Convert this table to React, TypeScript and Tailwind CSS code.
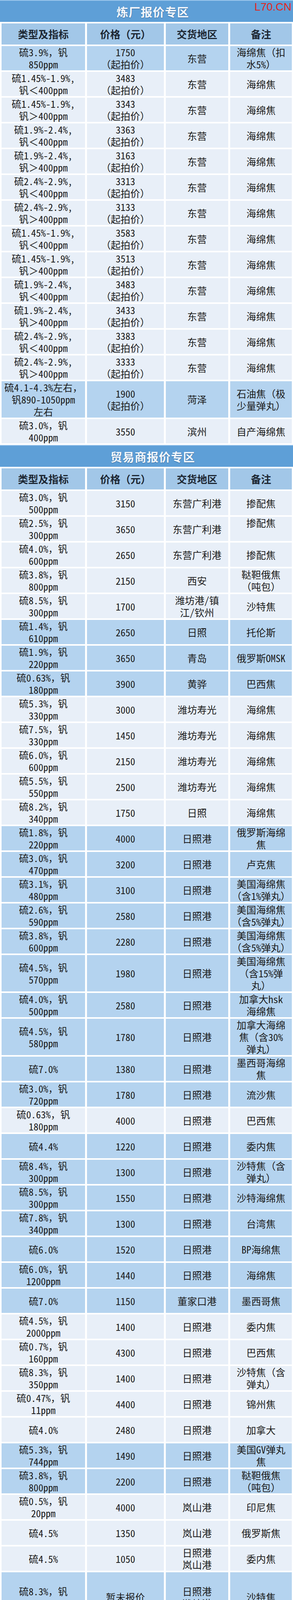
import React from "react";

type Row = { c: string[][]; hl?: boolean; h?: string };

const refinery: Row[] = [
  { c: [["硫3.9%，钒", "850ppm"], ["1750", "（起拍价）"], ["东营"], ["海绵焦（扣", "水5%）"]], hl: true },
  { c: [["硫1.45%-1.9%,", "钒＜400ppm"], ["3483", "（起拍价）"], ["东营"], ["海绵焦"]] },
  { c: [["硫1.45%-1.9%,", "钒＞400ppm"], ["3343", "（起拍价）"], ["东营"], ["海绵焦"]] },
  { c: [["硫1.9%-2.4%,", "钒＜400ppm"], ["3363", "（起拍价）"], ["东营"], ["海绵焦"]] },
  { c: [["硫1.9%-2.4%,", "钒＞400ppm"], ["3163", "（起拍价）"], ["东营"], ["海绵焦"]] },
  { c: [["硫2.4%-2.9%,", "钒＜400ppm"], ["3313", "（起拍价）"], ["东营"], ["海绵焦"]] },
  { c: [["硫2.4%-2.9%,", "钒＞400ppm"], ["3133", "（起拍价）"], ["东营"], ["海绵焦"]] },
  { c: [["硫1.45%-1.9%,", "钒＜400ppm"], ["3583", "（起拍价）"], ["东营"], ["海绵焦"]] },
  { c: [["硫1.45%-1.9%,", "钒＞400ppm"], ["3513", "（起拍价）"], ["东营"], ["海绵焦"]] },
  { c: [["硫1.9%-2.4%,", "钒＜400ppm"], ["3483", "（起拍价）"], ["东营"], ["海绵焦"]] },
  { c: [["硫1.9%-2.4%,", "钒＞400ppm"], ["3433", "（起拍价）"], ["东营"], ["海绵焦"]] },
  { c: [["硫2.4%-2.9%,", "钒＜400ppm"], ["3383", "（起拍价）"], ["东营"], ["海绵焦"]] },
  { c: [["硫2.4%-2.9%,", "钒＞400ppm"], ["3333", "（起拍价）"], ["东营"], ["海绵焦"]] },
  {
    c: [["硫4.1-4.3%左右，", "钒890-1050ppm", "左右"], ["1900", "（起拍价）"], ["菏泽"], ["石油焦（极", "少量弹丸）"]],
    hl: true,
    h: "h-[93px]",
  },
  { c: [["硫3.0%，钒", "400ppm"], ["3550"], ["滨州"], ["自产海绵焦"]] },
];

const trade: Row[] = [
  { c: [["硫3.0%，钒", "500ppm"], ["3150"], ["东营广利港"], ["掺配焦"]] },
  { c: [["硫2.5%，钒", "300ppm"], ["3650"], ["东营广利港"], ["掺配焦", "\u00a0"]] },
  { c: [["硫4.0%，钒", "600ppm"], ["2650"], ["东营广利港"], ["掺配焦"]] },
  { c: [["硫3.8%，钒", "800ppm"], ["2150"], ["西安"], ["鞑靼俄焦", "（吨包）"]] },
  { c: [["硫8.5%，钒", "300ppm"], ["1700"], ["潍坊港/镇", "江/钦州"], ["沙特焦"]] },
  { c: [["硫1.4%，钒", "610ppm"], ["2650"], ["日照"], ["托伦斯"]], hl: true },
  { c: [["硫1.9%，钒", "220ppm"], ["3650"], ["青岛"], ["俄罗斯OMSK"]], hl: true },
  { c: [["硫0.63%，钒", "180ppm"], ["3900"], ["黄骅"], ["巴西焦"]], hl: true },
  { c: [["硫5.3%，钒", "330ppm"], ["3000"], ["潍坊寿光"], ["海绵焦"]] },
  { c: [["硫7.5%，钒", "330ppm"], ["1450"], ["潍坊寿光"], ["海绵焦"]] },
  { c: [["硫6.0%，钒", "600ppm"], ["2150"], ["潍坊寿光"], ["海绵焦"]] },
  { c: [["硫5.5%，钒", "550ppm"], ["2500"], ["潍坊寿光"], ["海绵焦"]] },
  { c: [["硫8.2%，钒", "340ppm"], ["1750"], ["日照"], ["海绵焦"]] },
  { c: [["硫1.8%，钒", "220ppm"], ["4000"], ["日照港"], ["俄罗斯海绵", "焦"]], hl: true },
  { c: [["硫3.0%，钒", "470ppm"], ["3200"], ["日照港"], ["卢克焦"]], hl: true },
  { c: [["硫3.1%，钒", "480ppm"], ["3100"], ["日照港"], ["美国海绵焦", "（含1%弹丸）"]], hl: true },
  { c: [["硫2.6%，钒", "590ppm"], ["2580"], ["日照港"], ["美国海绵焦", "（含5%弹丸）"]], hl: true },
  { c: [["硫3.8%，钒", "600ppm"], ["2280"], ["日照港"], ["美国海绵焦", "（含5%弹丸）"]], hl: true },
  {
    c: [["硫4.5%，钒", "570ppm"], ["1980"], ["日照港"], ["美国海绵焦", "（含15%弹", "丸）"]],
    hl: true,
    h: "h-[93px]",
  },
  { c: [["硫4.0%，钒", "500ppm"], ["2580"], ["日照港"], ["加拿大hsk", "海绵焦"]], hl: true },
  {
    c: [["硫4.5%，钒", "580ppm"], ["1780"], ["日照港"], ["加拿大海绵", "焦（含30%", "弹丸）"]],
    hl: true,
    h: "h-[93px]",
  },
  { c: [["硫7.0%"], ["1380"], ["日照港"], ["墨西哥海绵", "焦"]], hl: true },
  { c: [["硫3.0%，钒", "720ppm"], ["1780"], ["日照港"], ["流沙焦"]], hl: true },
  { c: [["硫0.63%，钒", "180ppm"], ["4000"], ["日照港"], ["巴西焦"]] },
  { c: [["硫4.4%"], ["1220"], ["日照港"], ["委内焦"]], hl: true },
  { c: [["硫8.4%，钒", "300ppm"], ["1300"], ["日照港"], ["沙特焦（含", "弹丸）"]], hl: true },
  { c: [["硫8.5%，钒", "300ppm"], ["1550"], ["日照港"], ["沙特海绵焦"]], hl: true },
  { c: [["硫7.8%，钒", "340ppm"], ["1300"], ["日照港"], ["台湾焦"]], hl: true },
  { c: [["硫6.0%"], ["1520"], ["日照港"], ["BP海绵焦"]], hl: true },
  { c: [["硫6.0%，钒", "1200ppm"], ["1440"], ["日照港"], ["海绵焦"]], hl: true },
  { c: [["硫7.0%"], ["1150"], ["董家口港"], ["墨西哥焦"]], hl: true },
  { c: [["硫4.5%，钒", "2000ppm"], ["1400"], ["日照港"], ["委内焦"]] },
  { c: [["硫0.7%，钒", "160ppm"], ["4300"], ["日照港"], ["巴西焦"]] },
  { c: [["硫8.3%，钒", "350ppm"], ["1400"], ["日照港"], ["沙特焦（含", "弹丸）"]] },
  { c: [["硫0.47%，钒", "11ppm"], ["4400"], ["日照港"], ["锦州焦"]] },
  { c: [["硫4.0%"], ["2480"], ["日照港"], ["加拿大"]] },
  { c: [["硫5.3%，钒", "744ppm"], ["1490"], ["日照港"], ["美国GV弹丸", "焦"]], hl: true },
  { c: [["硫3.8%，钒", "800ppm"], ["2200"], ["日照港"], ["鞑靼俄焦", "（吨包）"]], hl: true },
  { c: [["硫0.5%，钒", "20ppm"], ["4000"], ["岚山港"], ["印尼焦"]] },
  { c: [["硫4.5%"], ["1350"], ["岚山港"], ["俄罗斯焦"]] },
  { c: [["硫4.5%"], ["1050"], ["日照港", "岚山港"], ["委内焦"]] },
  {
    c: [["硫8.3%，钒", "340ppm"], ["暂未报价"], ["日照港", "潍坊港"], ["沙特焦"]],
    hl: true,
    h: "h-[127px]",
  },
  { c: [["硫1.8%，钒400ppm"], ["暂未报价"], ["日照港"], ["海绵焦"]] },
  { c: [["硫6.0%，钒450ppm"], ["暂未报价"], ["日照港"], ["海绵焦"]] },
  { c: [["硫2.5%，钒950ppm"], ["暂未报价"], ["日照港"], ["弹丸焦"]] },
  { c: [["硫2.8%，钒800ppm"], ["暂未报价"], ["日照港"], ["弹丸焦"]] },
  { c: [["硫8.0%，钒", "400ppm"], ["暂未报价"], ["日照"], ["海绵焦"]], hl: true },
  { c: [["硫3.2%，钒", "480ppm"], ["暂未报价"], ["日照港"], ["海绵焦"]] },
];

const headers = ["类型及指标", "价格（元）", "交货地区", "备注"];

function Band({ title }: { title: string }) {
  return (
    <div className="h-[56px] shrink-0 border-t-[2px] border-[#9cc6ec] bg-[#5e9fd7] flex items-center justify-center pl-[32px] overflow-hidden">
      <span className="text-[30px] font-bold leading-[40px] tracking-[1px] text-[#f3f8fd] [text-shadow:0_1px_2px_rgba(20,50,90,0.55)]">
        {title}
      </span>
    </div>
  );
}

function Header() {
  return (
    <div className="h-[54px] shrink-0 grid grid-cols-[214px_197px_160px_158px] gap-x-[5px]">
      {headers.map((h) => (
        <div
          key={h}
          className="h-[54px] bg-[#a2c7e8] flex items-center justify-center text-[26px] leading-[34px] font-bold text-[#1d2733] whitespace-nowrap"
        >
          {h}
        </div>
      ))}
    </div>
  );
}

function DataRow({ row }: { row: Row }) {
  const bg = row.hl ? "bg-[#b4d3ef]" : "bg-[#e8eff8]";
  const h = row.h ?? "h-[62px]";
  return (
    <div className={`${h} shrink-0 grid grid-cols-[214px_197px_160px_158px] gap-x-[5px]`}>
      {row.c.map((lines, i) => (
        <div
          key={i}
          className={`${h} ${bg} flex flex-col items-center justify-center text-center text-[25px] leading-[31px] text-[#1c1c1c] whitespace-nowrap`}
        >
          {lines.map((l, j) => (
            <div key={j} className="h-[31px] leading-[31px]">
              {l}
            </div>
          ))}
        </div>
      ))}
    </div>
  );
}

function Section({ title, rows }: { title: string; rows: Row[] }) {
  return (
    <div className="flex flex-col gap-[4px]">
      <Band title={title} />
      <div className="flex flex-col gap-[4px] pl-[4px] pr-[3px]">
        <Header />
        {rows.map((r, i) => (
          <DataRow key={i} row={r} />
        ))}
      </div>
    </div>
  );
}

export default function App() {
  return (
    <div className="relative w-[751px] h-[4558px] overflow-hidden bg-white font-['Noto_Sans_Mono_CJK_SC','Noto_Sans_CJK_SC',sans-serif]">
      <div className="flex flex-col gap-[4px]">
        <Section title="炼厂报价专区" rows={refinery} />
        <Section title="贸易商报价专区" rows={trade} />
        <div className="h-[5px] bg-[#8db6df]" />
      </div>
      <div className="absolute top-[4px] right-[4px] font-['Liberation_Sans',Arial,sans-serif] text-[28px] leading-none text-[#e4241c]">
        L70.CN
      </div>
    </div>
  );
}
